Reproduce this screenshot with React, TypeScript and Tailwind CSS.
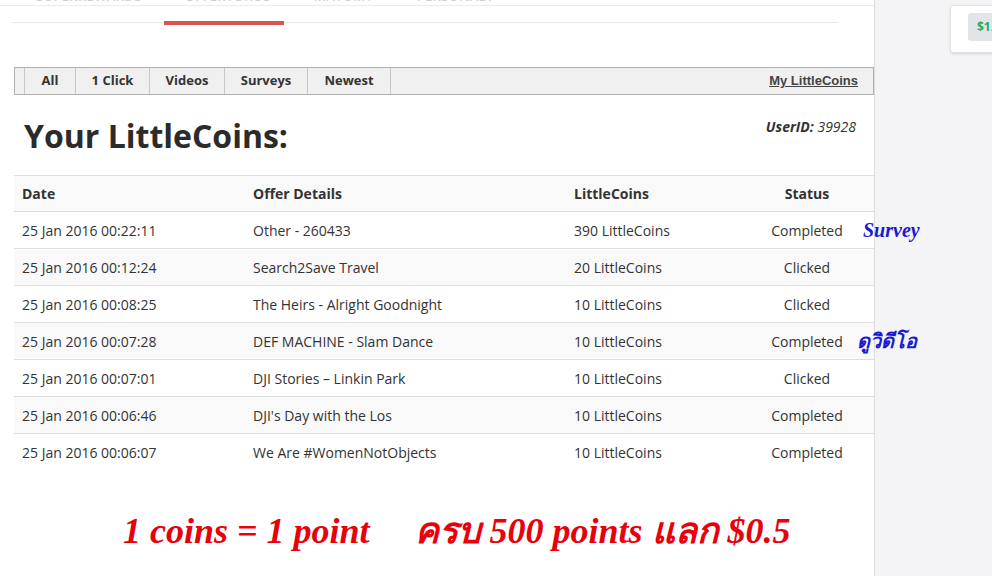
import React from "react";

const rows = [
  ["25 Jan 2016 00:22:11", "Other - 260433", "390 LittleCoins", "Completed"],
  ["25 Jan 2016 00:12:24", "Search2Save Travel", "20 LittleCoins", "Clicked"],
  ["25 Jan 2016 00:08:25", "The Heirs - Alright Goodnight", "10 LittleCoins", "Clicked"],
  ["25 Jan 2016 00:07:28", "DEF MACHINE - Slam Dance", "10 LittleCoins", "Completed"],
  ["25 Jan 2016 00:07:01", "DJI Stories \u2013 Linkin Park", "10 LittleCoins", "Clicked"],
  ["25 Jan 2016 00:06:46", "DJI's Day with the Los", "10 LittleCoins", "Completed"],
  ["25 Jan 2016 00:06:07", "We Are #WomenNotObjects", "10 LittleCoins", "Completed"],
];

const notes: Record<number, string> = { 0: "Survey", 3: "ดูวิดีโอ" };

export default function App() {
  return (
    <div
      className="flex w-[992px] h-[576px] overflow-hidden bg-[#f4f4f6] text-[#333]"
      style={{ fontFamily: "'Open Sans', 'Noto Sans', sans-serif" }}
    >
      <main className="w-[875px] shrink-0 bg-white border-r border-[#dcdcdc] flex flex-col">
        {/* top tabs (cut off) */}
        <div className="h-[6px] border-b border-[#ececec] overflow-hidden relative">
          <div className="flex text-[13px] font-semibold uppercase text-[#d0d0d0] tracking-wide -mt-[13px] leading-[18px]">
            <span className="ml-[36px]">SuperRewards</span>
            <span className="ml-[43px]">Offertoros</span>
            <span className="ml-[43px]">Matomy</span>
            <span className="ml-[43px]">Personaly</span>
          </div>
        </div>
        <div className="ml-[12px] w-[826px] h-[17px] border-b border-[#e8e8e8] relative">
          <div className="absolute left-[152px] top-[15px] w-[120px] h-[4px] bg-[#d9534f]" />
        </div>

        {/* filter bar */}
        <div className="mt-[44px] ml-[14px] w-[860px] h-[28px] bg-[#f0f0f0] border border-[#b0b0b0] flex items-stretch text-[13px] font-bold">
          <div className="w-[10px] border-r border-[#c8c8c8]" />
          <div className="w-[51px] border-r border-[#c8c8c8] flex items-center justify-center">All</div>
          <div className="w-[74px] border-r border-[#c8c8c8] flex items-center justify-center">1 Click</div>
          <div className="w-[75px] border-r border-[#c8c8c8] flex items-center justify-center">Videos</div>
          <div className="w-[83px] border-r border-[#c8c8c8] flex items-center justify-center">Surveys</div>
          <div className="w-[83px] border-r border-[#c8c8c8] flex items-center justify-center">Newest</div>
          <div className="flex-1 flex items-center justify-end pr-[15px]">
            <span
              className="underline text-[#444] text-[13px]"
              style={{ fontFamily: "'Liberation Sans', Arial, sans-serif" }}
            >
              My LittleCoins
            </span>
          </div>
        </div>

        {/* title */}
        <div className="h-[80px] flex justify-between pl-[24px] pr-[18px]">
          <h1 className="text-[32px] font-bold leading-none mt-[25px] text-[#2b2b2b]">Your LittleCoins:</h1>
          <div className="text-[14px] italic mt-[21px]">
            <b>UserID:</b> 39928
          </div>
        </div>

        {/* table */}
        <div className="ml-[14px] w-[860px] text-[14px]">
          <div className="h-[37px] flex items-center bg-[#f9f9f9] border-t border-b border-[#dedede] font-bold">
            <div className="w-[239px] pl-[8px]">Date</div>
            <div className="w-[321px]">Offer Details</div>
            <div className="w-[166px]">LittleCoins</div>
            <div className="w-[134px] text-center">Status</div>
          </div>
          {rows.map((r, i) => (
            <div
              key={i}
              className={`h-[37px] flex items-center relative ${i === rows.length - 1 ? "" : "border-b border-[#dedede]"} ${i % 2 === 1 ? "bg-[#f9f9f9]" : "bg-white"}`}
            >
              <div className="w-[239px] pl-[8px]">{r[0]}</div>
              <div className="w-[321px]">{r[1]}</div>
              <div className="w-[166px]">{r[2]}</div>
              <div className="w-[134px] text-center">{r[3]}</div>
              {notes[i] && (
                <span
                  className={`absolute whitespace-nowrap font-bold italic text-[#1a1ad0] ${i === 0 ? "left-[849px] top-[3px] text-[20px]" : "left-[843px] top-[3px] text-[20px]"}`}
                  style={{ fontFamily: "'Liberation Serif', 'Noto Sans', serif" }}
                >
                  {notes[i]}
                </span>
              )}
            </div>
          ))}
        </div>

        {/* promo */}
        <div
          className="mt-[42px] ml-[123px] text-[36px] font-bold italic text-[#e8000b] leading-none whitespace-pre"
          style={{ fontFamily: "'Liberation Serif', 'Noto Sans', serif" }}
        >
          {"1 coins = 1 point     ครบ 500 points แลก $0.5"}
        </div>
      </main>

      <aside className="flex-1 pt-[5px] pl-[75px]">
        <div className="h-[48px] bg-white border border-[#e2e2e2] rounded-l-[3px] shadow-sm pl-[17px] pt-[7px]">
          <div className="h-[28px] w-[40px] bg-[#e1e5e8] rounded-[3px] flex items-center pl-[9px] text-[12px] font-bold text-[#2eaa5c]">
            $1.
          </div>
        </div>
      </aside>
    </div>
  );
}
